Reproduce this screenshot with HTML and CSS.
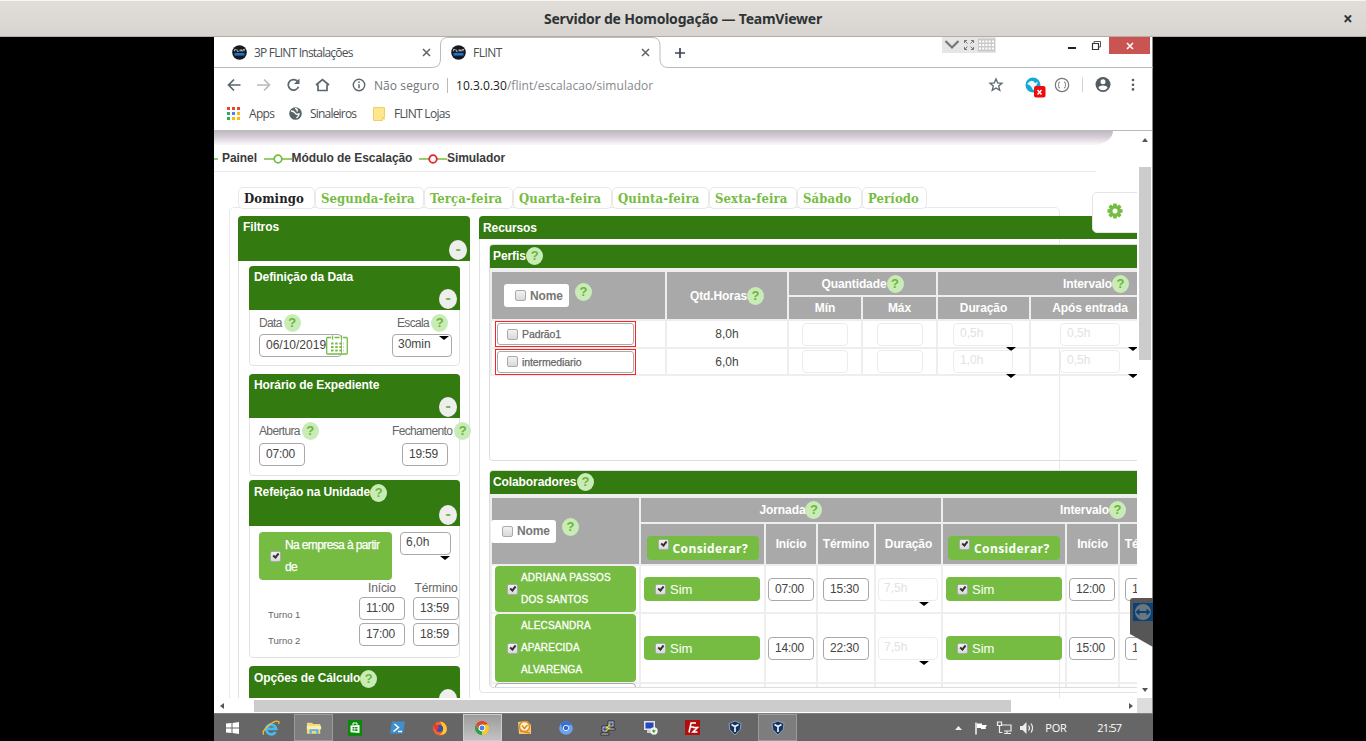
FILE: index.html
```
<!DOCTYPE html>
<html lang="pt-BR">
<head>
<meta charset="utf-8">
<title>Servidor de Homologação — TeamViewer</title>
<link rel="stylesheet" href="styles.css">
</head>
<body>
<svg width="0" height="0" class="defs" aria-hidden="true">
  <symbol id="flint" viewBox="0 0 15 15"><circle cx="7.5" cy="7.5" r="7.3" fill="#151a22"/><path d="M2.5 8h10v2.6h-10z" fill="#1976c8"/><path d="M2.5 6.3V4.6h2M5.2 4.6v1.7h1.5M8 4.6v1.7M9 6.3V4.6l1.2 1.7V4.6M11 4.6h2M12 4.6v1.7" stroke="#ddd" stroke-width=".8" fill="none"/></symbol>
  <symbol id="xmark" viewBox="0 0 9 9"><path d="M1 1l7 7M8 1L1 8" stroke="#5f6368" stroke-width="1.5"/></symbol>
  <symbol id="vbox" viewBox="0 0 16 16"><path d="M8 1l6 2.5-.8 6L8 15 2.800 9.500 2 3.500z" fill="#16335b" stroke="#9db4cf" stroke-width=".8"/><path d="M4.500 4.500L8 6.500l3.500-2M8 6.500v5.500" stroke="#e8f0fa" stroke-width="1.700" fill="none"/></symbol>
</svg>

<header class="titlebar"><span></span><h1>Servidor de Homologação — TeamViewer</h1><b class="tclose">×</b></header>

<div class="remote">
  <div class="tabstrip">
    <svg class="tabline" width="939" height="31" viewBox="0 0 939 31"><path d="M0 30.500H218Q226.500 30.500 226.500 22V8Q226.500 .5 234 .5H438Q446 .5 446 8V22Q446 30.500 454 30.500H939" fill="none" stroke="#b9bcbe"/></svg>
    <div class="ctab"><svg width="15" height="15"><use href="#flint"/></svg><span class="t1">3P FLINT Instalações</span><svg class="x" width="9" height="9"><use href="#xmark"/></svg></div>
    <div class="ctab"><svg width="15" height="15"><use href="#flint"/></svg><span class="t2">FLINT</span><svg class="x" width="9" height="9"><use href="#xmark"/></svg></div>
    <svg class="plus" width="12" height="12" viewBox="0 0 12 12"><path d="M6 1v10M1 6h10" stroke="#3c4650" stroke-width="1.700"/></svg>
    <div class="tvbar">
      <svg width="54" height="16" viewBox="0 0 54 16"><path d="M3.500 4L10 10.500 16.500 4" fill="none" stroke="#777" stroke-width="2.200"/><g stroke="#777" fill="none"><path d="M22.500 6V3.500H25M22.500 3.500l3 3M29 3.500h2.500V6M31.500 3.500l-3 3M22.500 10v2.500H25M22.500 12.500l3-3M29 12.500h2.500V10M31.500 12.500l-3-3"/></g><path fill="#c9c9c9" d="M36 1.500h17v13H36z"/><path d="M37 4.500h15M37 8h15M37 11.500h15" stroke="#fff" stroke-width="2" stroke-dasharray="2 1.250"/></svg>
    </div>
    <i class="min"></i>
    <svg class="restore" width="11" height="11" viewBox="0 0 11 11"><path d="M3 3V1.500h6.500v5.500H8" fill="none" stroke="#555" stroke-width="1"/><path d="M1.500 3.500h6v6h-6z" fill="#fff" stroke="#333" stroke-width="1.200"/></svg>
    <div class="winclose"><svg width="8" height="8" viewBox="0 0 8 8"><path d="M1 1l6 6M7 1L1 7" stroke="#fff" stroke-width="1.600"/></svg></div>
  </div>
  <div class="toolbar">
    <svg width="130" height="20" viewBox="0 0 130 20"><g fill="none" stroke="#5a666c" stroke-width="1.700"><path d="M26.500 10H15M20 4.500L14.500 10l5.500 5.500"/><path d="M43 10h12M50 4.500l5.500 5.500-5.500 5.500" stroke="#b8bcbf"/><path d="M84 7a5.300 5.300 0 1 0 .5 4.800"/><path d="M102 10l6.500-5.500L115 10M104 9.500V15.500h9V9.500"/></g><path d="M85.500 3.500v5.500H80z" fill="#5a666c"/></svg>
    <svg class="info" width="14" height="14" viewBox="0 0 14 14"><circle cx="7" cy="7" r="5.700" fill="none" stroke="#5a666c" stroke-width="1.400"/><path d="M7 6.200v4M7 3.600v1.500" stroke="#5a666c" stroke-width="1.500"/></svg>
    <span class="unsafe">Não seguro</span><span class="url"><b>10.3.0.30</b>/flint/escalacao/simulador</span>
    <svg class="tools" width="160" height="26" viewBox="0 0 160 26"><path d="M13 7l1.700 4 4.300.3-3.300 2.800 1.100 4.300-3.800-2.400-3.800 2.400 1.100-4.300L7 11.300l4.300-.3z" fill="none" stroke="#5a666c" stroke-width="1.300"/><circle cx="50" cy="13" r="7.500" fill="#13a9d4"/><path d="M44 12q5-6 8-1l3-1-2 4q4 3-3 4-2-5-6-6z" fill="#e9f8fc"/><rect x="51" y="14" width="11.500" height="11.500" rx="2" fill="#f20a0a"/><path d="M54.500 18l4 4.500M58.500 18l-4 4.500" stroke="#fff" stroke-width="1.500"/><circle cx="79" cy="13" r="6.700" fill="#fff" stroke="#777" stroke-width="1.200"/><path d="M77 10q-1.500 0-1.300 1.500T75 13q.8 0 .7 1.500T77 16M81 10q1.500 0 1.300 1.500T83 13q-.8 0-.7 1.500T81 16" fill="none" stroke="#777"/><path d="M99.500 5.500v15" stroke="#ccd6d8"/><circle cx="120" cy="12.500" r="7.500" fill="#505d62"/><circle cx="120" cy="9.700" r="2.500" fill="#fff"/><path d="M115.500 16q0-2.500 4.500-2.500t4.500 2.500q-1.700 2.300-4.500 2.300t-4.500-2.300z" fill="#fff"/><g fill="#505d62"><circle cx="150" cy="8" r="1.300"/><circle cx="150" cy="12.700" r="1.300"/><circle cx="150" cy="17.400" r="1.300"/></g></svg>
  </div>
  <div class="bookmarks">
    <svg width="13" height="13" viewBox="0 0 13 13"><g stroke-width="3" stroke-dasharray="3 2"><path d="M0 1.500h13" stroke="#ea4335"/><path d="M0 6.500h3" stroke="#34a853"/><path d="M5 6.500h3" stroke="#4285f4"/><path d="M10 6.500h3" stroke="#fbbc05"/><path d="M0 11.500h3" stroke="#34a853"/><path d="M5 11.500h8" stroke="#fbbc05"/></g></svg><span class="b1">Apps</span>
    <svg class="ml" width="13" height="13" viewBox="0 0 13 13"><circle cx="6.500" cy="6.500" r="6.300" fill="#5a6568"/><path d="M2 4q3 0 4 2t4 1q0 2-2.500 4M6 1.500Q9 2 8 4.500" fill="none" stroke="#fff" stroke-width="1.400"/></svg><span class="b2">Sinaleiros</span>
    <svg class="ml2" width="12" height="14" viewBox="0 0 12 14"><path d="M.5 .5h11v10h-2v3h-9z" fill="#fde68f" stroke="#f2d060"/><path d="M9.500 10.500h2v3z" fill="#edc84a"/></svg><span class="b3">FLINT Lojas</span>
  </div>

  <div class="viewrow">
    <main class="page">
      <div class="topshadow"></div>
      <nav class="crumbs">
        <svg width="4" height="11"><path d="M0 6h4" stroke="#76bc43" stroke-width="1.500"/></svg><span class="c1">Painel</span>
        <svg width="28" height="11" viewBox="0 0 28 11"><path d="M0 6h28" stroke="#76bc43" stroke-width="1.500"/><circle cx="14" cy="6" r="3.800" fill="#fff" stroke="#76bc43" stroke-width="1.800"/></svg><span class="c2">Módulo de Escalação</span>
        <svg width="28" height="11" viewBox="0 0 28 11"><path d="M0 6h28" stroke="#76bc43" stroke-width="1.500"/><circle cx="14" cy="6" r="3.800" fill="#fff" stroke="#e8232d" stroke-width="1.800"/></svg><span class="c3">Simulador</span>
      </nav>
      <nav class="days">
        <a class="d1 on">Domingo</a><a class="d2">Segunda-feira</a><a class="d3">Terça-feira</a><a class="d4">Quarta-feira</a><a class="d5">Quinta-feira</a><a class="d6">Sexta-feira</a><a class="d7">Sábado</a><a class="d8">Período</a>
      </nav>
      <div class="board">
        <section class="filters">
          <header class="gh tall">Filtros<i class="minus">-</i></header>
          <section class="fp">
            <header class="gh">Definição da Data<i class="minus">-</i></header>
            <div class="fb data">
              <div class="fc"><label>Data<i class="q">?</i></label><div class="line"><span class="in date">06/10/2019</span><svg class="cal" width="22" height="20" viewBox="0 0 22 20"><path d="M5 2.500H1.500q-.8 0-.8 1V18q0 1 .8 1h19q.8 0 .8-1V3.500q0-1-.8-1H17M8.500 2.500h5M6.500.5v4M15.500.5v4" fill="none" stroke="#76bc43" stroke-width="1.300"/><path d="M5 8.500h13M5 12h13M5 15.500h13" stroke="#76bc43" stroke-width="2" stroke-dasharray="2.500 1.700"/></svg></div></div>
              <div class="fc esc"><label>Escala<i class="q">?</i></label><span class="in sel up">30min</span></div>
            </div>
          </section>
          <section class="fp">
            <header class="gh">Horário de Expediente<i class="minus">-</i></header>
            <div class="fb hours">
              <div class="fc"><label>Abertura<i class="q">?</i></label><span class="in tm">07:00</span></div>
              <div class="fc fech"><label>Fechamento<i class="q">?</i></label><span class="in tm">19:59</span></div>
            </div>
          </section>
          <section class="fp ref">
            <header class="gh"><span>Refeição na Unidade<i class="q">?</i></span><i class="minus">-</i></header>
            <div class="fb meal">
              <div class="mrow"><div class="gbtn emp"><i class="ck on"></i><span>Na empresa à partir<br>de</span></div><span class="in sel six">6,0h</span></div>
              <div class="shifts"><span></span><b>Início</b><b>Término</b>
                <em>Turno 1</em><span class="in tm">11:00</span><span class="in tm">13:59</span>
                <em>Turno 2</em><span class="in tm">17:00</span><span class="in tm">18:59</span></div>
            </div>
          </section>
          <section class="fp opc">
            <header class="gh"><span>Opções de Cálculo<i class="q">?</i></span><i class="minus"></i></header>
          </section>
        </section>

        <section class="resources">
          <header class="gh slim">Recursos</header>
          <section class="rp perfis">
            <header class="gh slim">Perfis<i class="q">?</i></header>
            <div class="grid g1">
              <div class="h span2 nome"><div class="wbtn"><i class="ck"></i>Nome</div><i class="q">?</i></div>
              <div class="h span2">Qtd.Horas<i class="q">?</i></div>
              <div class="h w2">Quantidade<i class="q">?</i></div>
              <div class="h w2">Intervalo<i class="q">?</i></div>
              <div class="h">Mín</div><div class="h">Máx</div><div class="h">Duração</div><div class="h apos">Após entrada</div>

              <div class="c r1 n"><div class="red"><div><i class="ck"></i>Padrão1</div></div></div><div class="c r1 ctr">8,0h</div><div class="c r1 ctr"><span class="in off tm"></span></div><div class="c r1 ctr"><span class="in off tm"></span></div><div class="c r1 du"><span class="in off sel">0,5h</span></div><div class="c r1 ap"><span class="in off sel">0,5h</span></div>
              <div class="c n"><div class="red"><div><i class="ck"></i>intermediario</div></div></div><div class="c ctr">6,0h</div><div class="c ctr"><span class="in off tm"></span></div><div class="c ctr"><span class="in off tm"></span></div><div class="c du"><span class="in off sel">1,0h</span></div><div class="c ap"><span class="in off sel">0,5h</span></div>
            </div>
          </section>
          <section class="rp colab">
            <header class="gh slim">Colaboradores<i class="q">?</i></header>
            <div class="grid g2">
              <div class="h span2 nome"><div class="wbtn"><i class="ck"></i>Nome</div><i class="q">?</i></div>
              <div class="h w4">Jornada<i class="q">?</i></div>
              <div class="h w4">Intervalo<i class="q">?</i></div>
              <div class="h"><div class="gbtn cons"><i class="ck on"></i>Considerar?</div></div><div class="h">Início</div><div class="h">Término</div><div class="h">Duração</div>
              <div class="h"><div class="gbtn cons"><i class="ck on"></i>Considerar?</div></div><div class="h">Início</div><div class="h">Término</div><div class="h"></div>

              <div class="c r1 n"><div class="gbtn name"><i class="ck on"></i><span>ADRIANA PASSOS<br>DOS SANTOS</span></div></div>
              <div class="c r1 s"><div class="gbtn sim"><i class="ck on"></i>Sim</div></div><div class="c r1 t"><span class="in tm">07:00</span></div><div class="c r1 t te"><span class="in tm">15:30</span></div><div class="c r1 t"><span class="in off sel">7,5h</span></div>
              <div class="c r1 s"><div class="gbtn sim"><i class="ck on"></i>Sim</div></div><div class="c r1 t t2"><span class="in tm">12:00</span></div><div class="c r1 t te"><span class="in tm">13:00</span></div><div class="c r1"></div>

              <div class="c n"><div class="gbtn name"><i class="ck on"></i><span>ALECSANDRA<br>APARECIDA<br>ALVARENGA</span></div></div>
              <div class="c s"><div class="gbtn sim"><i class="ck on"></i>Sim</div></div><div class="c t"><span class="in tm">14:00</span></div><div class="c t te"><span class="in tm">22:30</span></div><div class="c t"><span class="in off sel">7,5h</span></div>
              <div class="c s"><div class="gbtn sim"><i class="ck on"></i>Sim</div></div><div class="c t t2"><span class="in tm">15:00</span></div><div class="c t te"><span class="in tm">16:00</span></div><div class="c"></div>

              <div class="c n"><div class="next"></div></div><div class="c"></div><div class="c"></div><div class="c"></div><div class="c"></div><div class="c"></div><div class="c"></div><div class="c"></div><div class="c"></div>
            </div>
          </section>
        </section>
      </div>
      <div class="gear"><svg width="16" height="16" viewBox="-8 -8 16 16"><g fill="#76bc43"><circle r="5.600"/><g id="t"><path d="M-1.600-7.600h3.200l.6 3h-4.400zM-1.600 7.600h3.200l.6-3h-4.400z"/><path transform="rotate(45)" d="M-1.600-7.600h3.200l.6 3h-4.400zM-1.600 7.600h3.200l.6-3h-4.400z"/></g><use href="#t" transform="rotate(90)"/></g><circle r="2.500" fill="#fff"/></svg></div>
    </main>
    <div class="vscroll"><svg width="6" height="4"><path d="M0 4L3 0l3 4z" fill="#555"/></svg><i></i><svg width="6" height="4"><path d="M0 0l3 4 3-4z" fill="#555"/></svg></div>
  </div>
  <div class="hscroll"><svg width="4" height="6"><path d="M4 0L0 3l4 3z" fill="#555"/></svg><i></i><svg width="4" height="6"><path d="M0 0l4 3-4 3z" fill="#555"/></svg><b></b></div>

  <footer class="taskbar">
    <svg class="start" width="14" height="12" viewBox="0 0 14 12"><path d="M0 1.500L5.500 1v4.500H0zM6.500.9L13 0v5.500H6.500zM0 6.500h5.500V11L0 10.500zM6.500 6.500H13V12l-6.500-.9z" fill="#fff"/></svg>
    <div class="apps">
      <div><svg width="18" height="16" viewBox="0 0 18 16"><path d="M13.500 12A5 4.800 0 1 1 14.200 8.800H5" fill="none" stroke="#49b9ee" stroke-width="2.800"/><path d="M2 14.500Q-1 12 6 6T16.500 1.500Q17.500 2 16.500 4" fill="none" stroke="#f3c22d" stroke-width="1.300"/></svg></div>
      <div class="open"><svg width="16" height="14" viewBox="0 0 18 15"><path d="M1 1.500h6l1 1.500h8v11H1z" fill="#f3d778"/><path d="M1 5h16v4H1z" fill="#fceeb0"/><path d="M4 14V9h10v5h-2.500v-3h-5v3z" fill="#55b4e6"/></svg></div>
      <div><svg width="14" height="16" viewBox="0 0 14 16"><path fill="#0a8a0a" d="M0 0h14v16H0z"/><path d="M5 5V3h4v2" fill="none" stroke="#fff"/><path d="M2.500 5.500l9-.5v8l-9-.7z" fill="#fff"/><path d="M4.500 7h2v1.500h-2zM7.200 7h2.300v1.500H7.200zM4.500 9.300h2v1.500h-2zM7.200 9.300h2.300V11H7.200z" fill="#0a8a0a"/></svg></div>
      <div><svg width="15" height="13" viewBox="0 0 15 13"><path fill="#3f8fcf" d="M2 .5h13l-2 12H0z"/><path d="M4.500 3l4 3.500-5 4M8 10.500h4" fill="none" stroke="#fff" stroke-width="1.500"/></svg></div>
      <div><svg width="16" height="16" viewBox="0 0 16 16"><circle cx="8" cy="8.500" r="7" fill="#f0642b"/><path d="M8 1.500q6 1 6.800 7t-7 6.500q4-3 3-7T8 1.500z" fill="#ffc82e"/><circle cx="7.500" cy="8.500" r="3.600" fill="#3b4cb5"/><path d="M2 4q3 0 5 3.500l-2 3Q1 9 2 4z" fill="#e7372e"/></svg></div>
      <div class="open hot"><svg width="14" height="14" viewBox="0 0 14 14"><circle cx="7" cy="7" r="7" fill="#f6c927"/><path d="M7 7V14A7 7 0 0 1 .9 3.500L4 9z" fill="#2a9f55"/><path d="M.9 3.500A7 7 0 0 1 13.100 3.500H7L4 8z" fill="#de4437"/><circle cx="7" cy="7" r="3" fill="#4a85ea" stroke="#fff"/></svg></div>
      <div><svg width="15" height="15" viewBox="0 0 15 15"><path d="M1 2l9-1 4 4v9H2z" fill="#f7c774"/><circle cx="7.500" cy="6.500" r="5" fill="#fff4d7" stroke="#de8e26" stroke-width="1.500"/><path d="M5 5.500l2.500 3 3-3.500M3 11l10 2" fill="none" stroke="#e08b18" stroke-width="1.600"/></svg></div>
      <div><svg width="14" height="14" viewBox="0 0 14 14"><circle cx="7" cy="7" r="6.800" fill="#6ea2ee"/><path d="M7 4h6.300A7 7 0 0 0 1.500 3L4 8z" fill="#3c70ca"/><circle cx="7" cy="7" r="2.700" fill="#3265c6" stroke="#dce9ff"/></svg></div>
      <div><svg width="16" height="16" viewBox="0 0 16 16"><g fill="#bfc4ca" stroke="#222" stroke-width=".8"><path d="M8 1h6v6H8zM7 8h8v2H7zM2 6h6v6H2zM1 13h8v2H1z"/></g><path d="M9.500 2.500h3v3h-3zM3.500 7.500h3v3h-3z" fill="#2746b0"/><path d="M12 2L5 8.500h3L4 13l7-5.500H8z" fill="#f8e532"/></svg></div>
      <div><svg width="15" height="15" viewBox="0 0 15 15"><path d="M1 1h11v9H1z" fill="#dfe4ef"/><path d="M2.500 2.500h8v6h-8z" fill="#2947bd"/><path d="M4 10h5v3H4z" fill="#c8ccd5"/><circle cx="11" cy="11" r="3.700" fill="#f0f4ea"/><path d="M9 11l2-2v1.500l2-.5-2 3z" fill="#3d9d30"/></svg></div>
      <div><svg width="15" height="15" viewBox="0 0 15 15"><path fill="#b40c0c" d="M0 0h15v15H0z"/><path d="M4 12.500L6 3h5M5 7h4M8 7.500h4.500L8 12h4.500" fill="none" stroke="#fff" stroke-width="1.600"/></svg></div>
      <div><svg width="16" height="16"><use href="#vbox"/></svg></div>
      <div class="open"><svg width="16" height="16"><use href="#vbox"/></svg></div>
    </div>
    <svg class="tray" width="82" height="14" viewBox="0 0 82 14"><path d="M1 9l3.500-4L8 9z" fill="#eee"/><path d="M22 1.500v12" stroke="#fff" stroke-width="1.400"/><path d="M23 2.500h5v1.500h5l-1.500 2.500L32 8h-5V7h-4z" fill="#fff"/><g fill="none" stroke="#eee" stroke-width="1.200"><path d="M48 4h9v6h-7M53 10v2.500M50 12.500h7M43.500 1h4v3.500h-4zM45.500 4.500v7h3"/><path d="M74.500 4.500q2 2.500 0 5M77 2.500q3 4.500 0 9"/></g><path d="M66 5h2.500L72.500 1v12l-4-4H66z" fill="#eee"/></svg>
    <span class="por">POR</span><span class="clock">21:57</span>
  </footer>
  <svg class="tvside" width="23" height="49" viewBox="0 0 23 49"><path d="M3 0H23V49L0 36V3Q0 0 3 0z" fill="#565656"/><path d="M3 5h20v18H3z" fill="#0a4276"/><circle cx="13" cy="14" r="8" fill="#6b7780"/><path d="M5.500 14l4-3.500V13h7v-2.500l4 3.500-4 3.500V15h-7v2.500z" fill="#0a4276"/></svg>
</div>
</body>
</html>
```
FILE: styles.css
```
* { box-sizing: border-box; }
body { margin: 0; width: 1366px; height: 741px; overflow: hidden; background: #000; font-family: "Liberation Sans", Arial, sans-serif; font-size: 12px; color: #444; }
i, em { font-style: normal; }
svg { flex: none; display: block; }
.defs { position: absolute; }

/* outer window */
.titlebar { height: 37px; display: grid; grid-template-columns: 60px 1fr 60px; align-items: center; background: linear-gradient(#e1deda, #d8d4d0); border-top: 1px solid #f5f4f2; border-bottom: 1px solid #b5aca2; color: #2e3436; }
.titlebar h1 { margin: 0; text-align: center; font: bold 14px "Noto Sans", sans-serif; letter-spacing: -.22px; }
.tclose { font: bold 17px "Noto Sans", sans-serif; padding-left: 37px; }
.remote { position: relative; margin-left: 214px; width: 939px; height: 704px; background: #fff; display: flex; flex-direction: column; border-right: 1px solid #888; font-family: "Liberation Sans", Arial, sans-serif; }

/* browser chrome */
.tabstrip { position: relative; height: 31px; display: flex; font-family: "Open Sans", "Noto Sans", sans-serif; }
.tabline { position: absolute; left: 0; top: 0; }
.ctab { width: 219px; height: 31px; padding-left: 18px; display: flex; align-items: center; color: #4a4f54; }
.ctab span { margin-left: 7px; flex: 1; white-space: nowrap; }
.ctab .x { margin-right: 2px; }
.t1 { letter-spacing: -.78px; }
.t2 { letter-spacing: -.5px; }
.plus { margin: 10px 0 0 22px; }
.tvbar { margin-left: 256px; width: 54px; height: 16px; background: #e6e6e6; }
.min { width: 8px; height: 2px; background: #222; margin: 10px 0 0 72px; }
.restore { margin: 3px 0 0 15px; }
.winclose { margin-left: 7px; width: 41px; height: 17px; background: #ca5452; display: flex; align-items: center; justify-content: center; }
.toolbar { height: 34px; display: flex; align-items: center; font: 12px "Open Sans", sans-serif; color: #70757a; white-space: nowrap; }
.info { margin-left: 8px; }
.unsafe { margin-left: 8px; width: 74px; border-right: 1px solid #bbb; line-height: 15px; letter-spacing: .08px; }
.url { margin-left: 8px; flex: 1; letter-spacing: .03px; color: #85898d; }
.url b { font-weight: 400; color: #222; }
.tools { margin-right: 9px; }
.bookmarks { height: 29px; padding: 0 0 5px 13px; display: flex; align-items: center; font: 12px "Open Sans", sans-serif; letter-spacing: -.7px; color: #4a4f54; border-bottom: 1px solid #bbb; white-space: nowrap; }
.bookmarks span { padding-left: 9px; }
.b1 { width: 49px; } .b2 { width: 71px; }
.bookmarks .b2 { padding-left: 8px; letter-spacing: -.8px; }

/* page viewport */
.viewrow { height: 567px; display: flex; }
.page { position: relative; width: 923px; height: 567px; overflow: hidden; }
.topshadow { height: 14px; width: 899px; background: linear-gradient(#bfbabf, #d2c9d2 35%, #ece6ec 75%, #fbf8fb); border-bottom-right-radius: 20px 14px; }
.crumbs { height: 27px; width: 882px; border-bottom: 1px solid #eaeaea; display: flex; align-items: center; font-weight: bold; color: #3b3b3b; white-space: nowrap; letter-spacing: -.06px; }
.crumbs svg { margin-right: -.500px; }
.crumbs svg + span { padding-left: .500px; }
.c1 { margin-left: 4px; width: 42px; } .c2 { width: 128px; }
.days { height: 35px; padding: 15px 0 0 24px; display: flex; position: relative; }
.days a { height: 22px; flex: none; border: 1px solid #e9e9e9; border-radius: 5px; background: #fff; padding-left: 5px; font: bold 13px/21px "DejaVu Serif Condensed", "DejaVu Serif", serif; font-stretch: condensed; letter-spacing: .1px; color: #76bc43; white-space: nowrap; }
.days .on { color: #222; }
.d1 { width: 77px; } .d2 { width: 109px; } .d3 { width: 89px; } .d4 { width: 99px; } .d5 { width: 97px; } .d6 { width: 88px; } .d7 { width: 65px; } .d8 { width: 65px; }
.board { margin: 0 0 0 15px; width: 831px; height: 560px; border: 1px solid #e9e9e9; border-radius: 5px; padding: 8px 0 0 8px; display: flex; gap: 9px; }

.gh { background: #337a10; color: #fff; font-weight: bold; font-size: 12px; letter-spacing: -.1px; height: 45px; padding: 0 3px 0 5px; line-height: 22px; display: flex; justify-content: space-between; border-radius: 4px 4px 0 0; white-space: nowrap; }
.gh > span { display: flex; align-items: center; }
.minus { flex: none; align-self: flex-end; width: 18px; height: 20px; border-radius: 50%; background: #eee; color: #76bc43; text-align: center; line-height: 18px; margin-bottom: 1px; font-size: 16px; font-weight: bold; }
.gh.slim { height: 23px; justify-content: flex-start; align-items: center; padding-left: 4px; }
.q { display: inline-block; flex: none; width: 17px; height: 18px; border-radius: 50%; background: #c9ecb7; color: #6cb53a; font: bold 13px/18px "Liberation Sans", sans-serif; letter-spacing: 0; text-align: center; }

/* filters column */
.filters { flex: none; width: 232px; height: 520px; border: 1px solid #e3e3e3; border-radius: 4px; display: flex; flex-direction: column; }
.filters > .gh { flex: none; margin: -1px -1px 0; }
.fp { flex: none; width: 211px; margin: 5px 0 0 10px; height: 100px; border: 1px solid #e3e3e3; border-radius: 4px; }
.fp .gh { height: 44px; margin: -1px -1px 0; line-height: 23px; }
.fp + .fp { margin-top: 8px; height: 102px; }
.fp + .fp.ref { height: 178px; margin-top: 4px; }
.fp.ref .gh { height: 46px; }
.fp + .fp.opc { margin-top: 8px; }
.fp .gh > span { height: 25px; }
.fb { padding: 4px 0 0 9px; display: flex; color: #666; }
.fc { flex: none; display: flex; flex-direction: column; width: 133px; }
.fc label { display: flex; align-items: center; height: 18px; gap: 1px; margin-bottom: 2px; white-space: nowrap; letter-spacing: -.65px; }
.fc label .q { margin-left: 1px; }
.in { flex: none; display: block; height: 23px; border: 1px solid #a9a9a9; border-radius: 4px; background: #fff; padding: 0 0 0 6px; line-height: 21px; color: #444; white-space: nowrap; }
.tm { width: 46px; letter-spacing: -.2px; }
.line { display: flex; }
.date { width: 83px; }
.cal { margin: 1px 0 0 -16px; position: relative; }
.esc label { padding-left: 5px; }
.sel { width: 60px; padding-left: 5px; position: relative; line-height: 19px; }
.sel::after { content: ""; position: absolute; right: -4px; top: 23px; border: 5px solid transparent; border-top: 4px solid #000; border-bottom: 0; }
.up::after { top: 1px; right: 2px; }
.hours label { margin-bottom: 3px; }
.fech .in { margin-left: 10px; }
.meal { flex-direction: column; padding-top: 6px; }
.mrow { display: flex; gap: 8px; }
.gbtn { background: #76bc43; color: #fff; border-radius: 4px; display: flex; align-items: center; }
.emp { width: 133px; height: 48px; padding-left: 11px; gap: 4px; line-height: 22.500px; white-space: nowrap; letter-spacing: -.62px; -webkit-text-stroke: .25px #fff; }
.six { width: 51px; }
.six::after { right: 0; }
.shifts { display: grid; grid-template-columns: 100px 54px 46px; grid-template-rows: 17px 25.500px 23px; }
.shifts b { font-weight: 400; text-align: center; line-height: 17px; white-space: nowrap; letter-spacing: -.15px; }
.shifts b:nth-of-type(1) { width: 46px; }
.shifts em { font-size: 9.500px; padding: 12px 0 0 9px; }

/* check boxes */
.ck { flex: none; width: 11px; height: 11px; border: 1px solid #aaa; border-radius: 2px; background: linear-gradient(#f2f2f2, #d9d9d9); position: relative; }
.ck.on::after { content: ""; position: absolute; left: 3px; top: 0; width: 3px; height: 6px; border: solid #333; border-width: 0 2px 2px 0; box-sizing: content-box; width: 1.500px; height: 4px; transform: rotate(40deg); }

/* resources column */
.resources { flex: none; width: 840px; height: 477px; border: 1px solid #e3e3e3; border-radius: 4px; }
.resources > .gh { margin: -1px -1px 0; }
.rp { margin: 5px 0 0 9px; width: 830px; height: 217px; border: 1px solid #ddd; border-radius: 4px; overflow: hidden; }
.rp .gh.slim { height: 24px; margin: -1px -1px 0; }
.rp .gh .q { margin-left: .500px; }
.colab { margin-top: 9px; height: 218px; }
.grid { display: grid; width: max-content; border-left: 2px solid #eee; border-top: 4px solid #eee; }
.g1 { grid-template-columns: 175px 122px 74px 75px 93px 225px; grid-template-rows: 25px 24px 28px 27px; }
.g2 { grid-template-columns: 149px 125px 52px 58px 67px 124px 53px 58px 67px; grid-template-rows: 26px 42px 48px 70px 30px; }
.h { background: #a9a9a9; color: #fff; font-weight: bold; letter-spacing: -.1px; display: flex; align-items: center; justify-content: center; border-right: 2px solid #eee; border-bottom: 2px solid #eee; white-space: nowrap; }
.span2 { grid-row: span 2; } .w2 { grid-column: span 2; } .w4 { grid-column: span 4; }
.apos { padding-right: 105px; }
.c { border-right: 2px solid #eee; border-bottom: 2px solid #eee; display: flex; align-items: center; }
.r1 { background: #fff; }
.ctr { justify-content: center; }
.nome { justify-content: flex-start; }
.g1 .nome { padding-left: 12px; }
.g2 .wbtn { margin-left: -1px; }
.nome .q { margin: -8px 0 0 6px; }
.wbtn { width: 65px; height: 23px; border-radius: 3px; background: #fff; color: #777; display: flex; align-items: center; padding-left: 11px; gap: 4px; }
.n { padding-left: 3px; }
.red { width: 141px; height: 26px; border: 1px solid #f22; padding: 1px; }
.red div { height: 22px; border: 1px solid #aaa; border-radius: 3px; display: flex; align-items: center; gap: 4px; padding-left: 9px; font-size: 10.500px; letter-spacing: -.1px; color: #666; -webkit-text-stroke: .25px #666; }
.in.off { border-color: #ececec; color: #e2e2e2; background: none; }
.du { padding-left: 15px; } .ap { padding-left: 29px; }
.du .sel, .ap .sel { padding-left: 6px; }
.ap .sel::after { right: -19px; }
.cons { width: 112px; height: 24px; margin-top: 8px; padding: 0 0 0 11px; gap: 4px; font: bold 12px "Open Sans", sans-serif; letter-spacing: .4px; }
.cons .ck { margin-top: -7px; }
.name { width: 141px; height: 46px; padding-left: 12px; gap: 3px; font-size: 10px; letter-spacing: .2px; line-height: 22px; -webkit-text-stroke: .3px #fff; white-space: nowrap; }
.c:not(.r1) .name { height: 68px; }
.s { padding-left: 3px; }
.sim { width: 116px; height: 24px; padding-left: 11px; gap: 4px; font-size: 13px; }
.t { padding-left: 2px; } .te { padding-left: 5px; }
.t .sel::after { right: 8px; }
.next { width: 141px; height: 30px; border: 1px solid #aaa; border-radius: 4px; }

.gear { position: absolute; left: 878px; top: 61px; width: 50px; height: 41px; background: #fff; border: 1px solid #e5e5e5; border-radius: 5px; padding: 10px 0 0 14px; }

/* scroll bars */
.vscroll { width: 15px; padding: 7px 0 6px 2px; display: flex; flex-direction: column; }
.vscroll svg { margin-left: 3px; }
.vscroll i { width: 12px; height: 193px; background: #ccc; margin: 25px 0 auto; }
.hscroll { height: 15px; display: flex; align-items: center; padding-left: 6px; }
.hscroll i { width: 757px; height: 12px; background: #ccc; margin: 0 118px 0 30px; }
.hscroll b { width: 15px; height: 15px; background: #ddd; margin-left: auto; }

/* task bar */
.taskbar { height: 28px; width: 939px; background: #666; border-top: 1px solid #808080; display: flex; align-items: center; color: #fff; font: 11px "Open Sans", sans-serif; }
.start { margin-left: 12px; }
.apps { margin-left: 11px; display: grid; grid-template-columns: repeat(13, 42.180px); }
.apps div { width: 40px; height: 27px; display: flex; align-items: center; justify-content: center; }
.apps .open { border: 1px solid #9a9a9a; background: #7d7d7d; margin-left: 1px; width: 39px; }
.apps .hot { background: linear-gradient(#9c9c9c, #c2c2c2); border-color: #ccc; }
.tray { margin-left: 155px; }
.por { margin-left: 9px; width: 52px; letter-spacing: -.2px; }
.clock { letter-spacing: -.8px; }
.tvside { position: absolute; left: 916px; top: 561px; }
```
